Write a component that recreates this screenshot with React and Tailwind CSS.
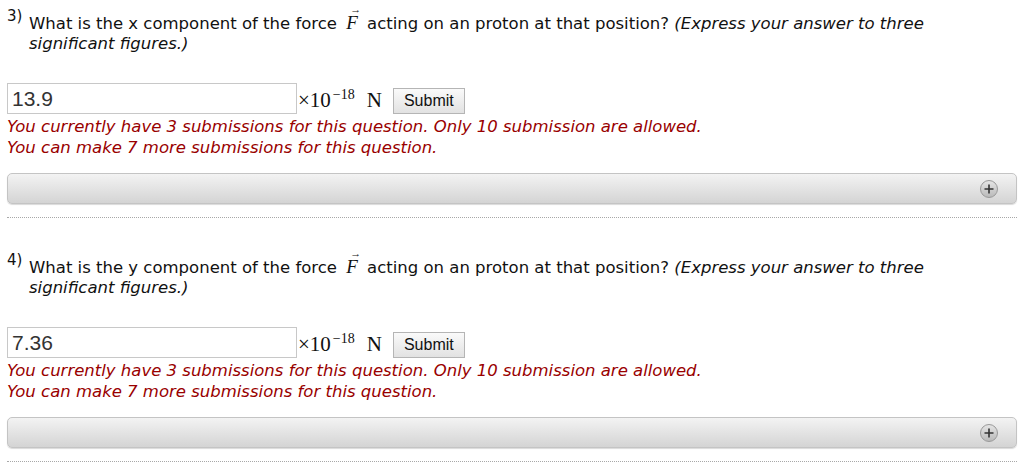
import React from 'react'

const QUESTIONS = [
  { num: '3', axis: 'x', value: '13.9' },
  { num: '4', axis: 'y', value: '7.36' },
]

function VecF() {
  return (
    <span className="relative inline-block font-['Liberation_Serif',serif] italic text-[19px] leading-none mx-[4px]">
      F
      <span className="absolute left-[4px] -top-[9px] text-[11px] not-italic">&rarr;</span>
    </span>
  )
}

function PlusIcon() {
  return (
    <svg width="20" height="20" viewBox="0 0 20 20">
      <defs>
        <linearGradient id="pg" x1="0" y1="0" x2="0" y2="1">
          <stop offset="0" stopColor="#e6e6e6" />
          <stop offset="1" stopColor="#b8b8b8" />
        </linearGradient>
      </defs>
      <circle cx="10" cy="10" r="8.5" fill="url(#pg)" stroke="#9a9a9a" strokeWidth="1" />
      <path d="M10 5.5v9M5.5 10h9" stroke="#333" strokeWidth="1.6" />
    </svg>
  )
}

function Question({ num, axis, value }) {
  return (
    <div className="px-[7px]">
      <div className="flex items-start">
        <span className="text-[15px] leading-none w-[22px] shrink-0 pt-[2px]">{num})</span>
        <div className="w-[920px] pt-[6px] text-[16.5px] leading-[20px] text-[#111]">
          What is the {axis} component of the force <VecF /> acting on an proton at that position?{' '}
          <em>(Express your answer to three significant figures.)</em>
        </div>
      </div>

      <div className="flex items-center mt-[29px] h-[31px]">
        <div className="w-[290px] h-[31px] border border-[#c8c8c8] flex items-center px-[4px] text-[21px] text-[#333] font-['Liberation_Sans',sans-serif]">
          {value}
        </div>
        <span className="ml-[1px] font-['Liberation_Serif',serif] text-[21px] text-[#111] leading-none pt-[4px]">
          &times;10<sup className="text-[14px] ml-[2px] relative -top-[8px]">&minus;18</sup>
          <span className="ml-[12px]">N</span>
        </span>
        <button className="ml-[11px] mt-[4px] h-[26px] px-[10px] border border-[#b5b5b5] bg-gradient-to-b from-[#fafafa] to-[#e2e2e2] text-[16px] text-[#111] font-['Liberation_Sans',sans-serif] leading-none">
          Submit
        </button>
      </div>

      <div className="italic text-[#990000] text-[16.5px] leading-[21px] mt-[2px]">
        <div>You currently have 3 submissions for this question. Only 10 submission are allowed.</div>
        <div>You can make 7 more submissions for this question.</div>
      </div>

      <div className="mt-[15px] h-[31px] rounded-[5px] border border-[#c4c4c4] bg-gradient-to-b from-[#f3f3f3] to-[#d4d4d4] shadow-[0_1px_1px_rgba(0,0,0,0.15)] flex items-center justify-end pr-[17px]">
        <PlusIcon />
      </div>

      <div className="mt-[13px] border-t border-dotted border-[#a8a8a8]" />
    </div>
  )
}

export default function App() {
  return (
    <div className="w-[1024px] h-[476px] bg-white overflow-hidden font-['DejaVu_Sans',sans-serif] text-[#111]">
      <div className="pt-[7px]">
        <Question {...QUESTIONS[0]} />
      </div>
      <div className="pt-[33px]">
        <Question {...QUESTIONS[1]} />
      </div>
    </div>
  )
}
